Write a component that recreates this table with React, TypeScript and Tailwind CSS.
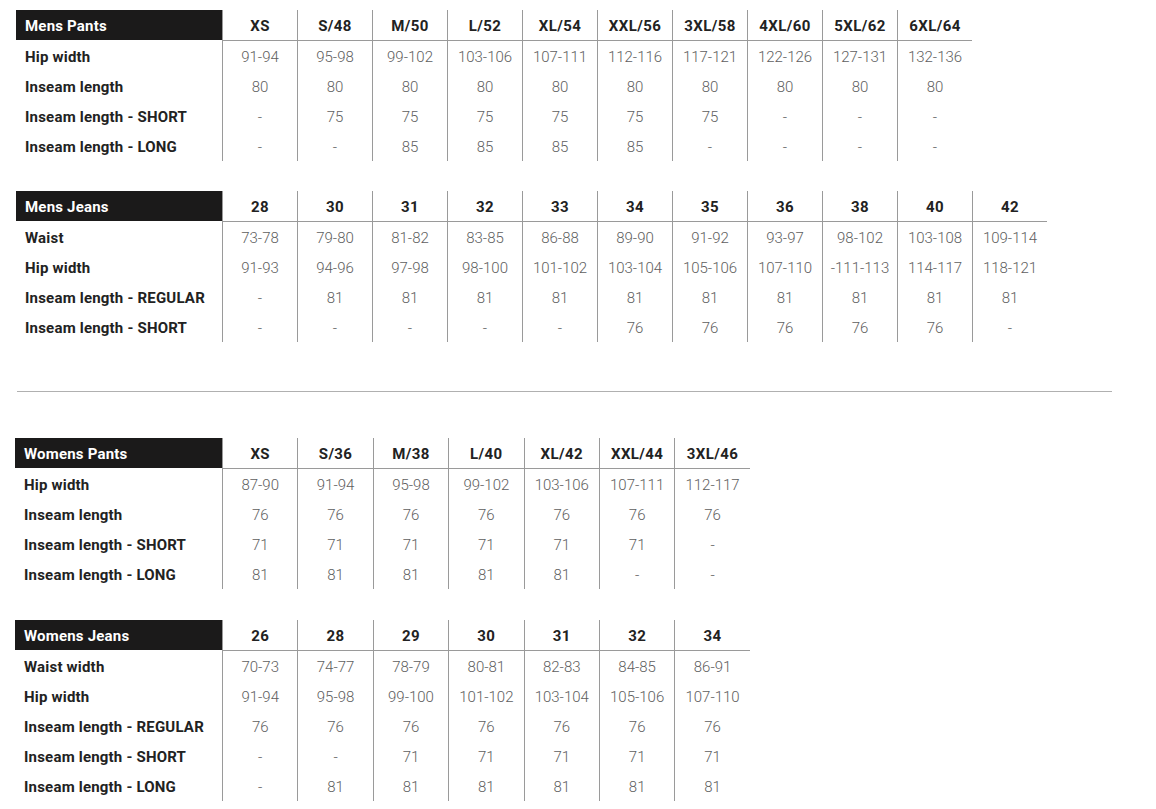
import React from "react";

type Table = {
  title: string;
  cols: string[];
  rows: { label: string; values: string[] }[];
};

const tables: Table[] = [
  {
    title: "Mens Pants",
    cols: ["XS", "S/48", "M/50", "L/52", "XL/54", "XXL/56", "3XL/58", "4XL/60", "5XL/62", "6XL/64"],
    rows: [
      { label: "Hip width", values: ["91-94", "95-98", "99-102", "103-106", "107-111", "112-116", "117-121", "122-126", "127-131", "132-136"] },
      { label: "Inseam length", values: ["80", "80", "80", "80", "80", "80", "80", "80", "80", "80"] },
      { label: "Inseam length - SHORT", values: ["-", "75", "75", "75", "75", "75", "75", "-", "-", "-"] },
      { label: "Inseam length - LONG", values: ["-", "-", "85", "85", "85", "85", "-", "-", "-", "-"] },
    ],
  },
  {
    title: "Mens Jeans",
    cols: ["28", "30", "31", "32", "33", "34", "35", "36", "38", "40", "42"],
    rows: [
      { label: "Waist", values: ["73-78", "79-80", "81-82", "83-85", "86-88", "89-90", "91-92", "93-97", "98-102", "103-108", "109-114"] },
      { label: "Hip width", values: ["91-93", "94-96", "97-98", "98-100", "101-102", "103-104", "105-106", "107-110", "-111-113", "114-117", "118-121"] },
      { label: "Inseam length - REGULAR", values: ["-", "81", "81", "81", "81", "81", "81", "81", "81", "81", "81"] },
      { label: "Inseam length - SHORT", values: ["-", "-", "-", "-", "-", "76", "76", "76", "76", "76", "-"] },
    ],
  },
  {
    title: "Womens Pants",
    cols: ["XS", "S/36", "M/38", "L/40", "XL/42", "XXL/44", "3XL/46"],
    rows: [
      { label: "Hip width", values: ["87-90", "91-94", "95-98", "99-102", "103-106", "107-111", "112-117"] },
      { label: "Inseam length", values: ["76", "76", "76", "76", "76", "76", "76"] },
      { label: "Inseam length - SHORT", values: ["71", "71", "71", "71", "71", "71", "-"] },
      { label: "Inseam length - LONG", values: ["81", "81", "81", "81", "81", "-", "-"] },
    ],
  },
  {
    title: "Womens Jeans",
    cols: ["26", "28", "29", "30", "31", "32", "34"],
    rows: [
      { label: "Waist width", values: ["70-73", "74-77", "78-79", "80-81", "82-83", "84-85", "86-91"] },
      { label: "Hip width", values: ["91-94", "95-98", "99-100", "101-102", "103-104", "105-106", "107-110"] },
      { label: "Inseam length - REGULAR", values: ["76", "76", "76", "76", "76", "76", "76"] },
      { label: "Inseam length - SHORT", values: ["-", "-", "71", "71", "71", "71", "71"] },
      { label: "Inseam length - LONG", values: ["-", "81", "81", "81", "81", "81", "81"] },
    ],
  },
];

function SizeTable({ t, wide }: { t: Table; wide?: boolean }) {
  const labelW = wide ? "w-[207px]" : "w-[206px]";
  const colW = wide ? "w-[75.4px]" : "w-[75px]";
  return (
    <div className="flex flex-col">
      <div className="flex h-[31px]">
        <div className={`${labelW} h-[30px] bg-[#1b1a1a] text-white font-bold text-[15px] flex items-center pl-[9px] pt-[3px] tracking-[0.2px]`}>
          {t.title}
        </div>
        {t.cols.map((c, i) => (
          <div
            key={i}
            className={`${colW} border-l border-b border-[#9a9a9a] flex items-center justify-center pt-[3px] font-bold text-[15px] text-[#222] tracking-[0.4px]`}
          >
            {c}
          </div>
        ))}
      </div>
      {t.rows.map((r, ri) => (
        <div key={ri} className="flex h-[30px]">
          <div className={`${labelW} flex items-center pl-[9px] pt-[2px] font-bold text-[15px] text-[#222] tracking-[0.2px]`}>
            {r.label}
          </div>
          {r.values.map((v, vi) => (
            <div
              key={vi}
              className={`${colW} border-l border-[#9a9a9a] flex items-center justify-center pt-[2px] text-[15px] text-[#5e5e5e] font-light`}
            >
              {v}
            </div>
          ))}
        </div>
      ))}
    </div>
  );
}

export default function App() {
  return (
    <div
      className="w-[1156px] h-[809px] bg-white overflow-hidden"
      style={{ fontFamily: "Roboto, 'Liberation Sans', sans-serif" }}
    >
      <div className="pl-[16px] pt-[10px]">
        <SizeTable t={tables[0]} />
        <div className="h-[30px]" />
        <SizeTable t={tables[1]} />
      </div>
      <div className="ml-[17px] mt-[49px] w-[1095px] h-px bg-[#b0b0b0]" />
      <div className="pl-[15px] pt-[46px]">
        <SizeTable t={tables[2]} wide />
        <div className="h-[31px]" />
        <SizeTable t={tables[3]} wide />
      </div>
    </div>
  );
}
